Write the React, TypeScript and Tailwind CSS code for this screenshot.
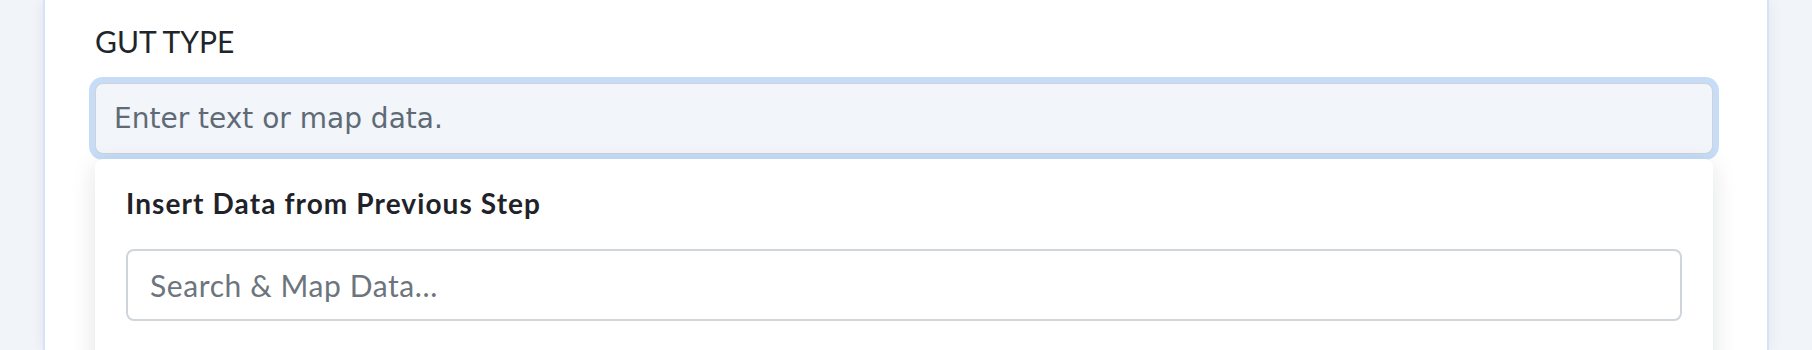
import React from "react";

const FieldLabel = ({ children }: { children: React.ReactNode }) => (
  <label className="block pt-[23px] text-[30px] leading-[36px] text-[#212529] font-['Lato',sans-serif]">
    {children}
  </label>
);

const MapDataDropdown = () => {
  return (
    <div className="mt-[5px] rounded-lg bg-white px-[31px] pt-[27px] pb-[60px] shadow-[0_6px_24px_rgba(15,23,42,0.12)]">
      <h3 className="text-[28px] leading-[34px] font-bold tracking-[1.1px] text-[#1f2329] font-['Lato',sans-serif]">
        Insert Data from Previous Step
      </h3>
      <input
        type="text"
        placeholder="Search & Map Data..."
        className="mt-[29px] block h-[72px] w-full rounded-lg border-2 border-[#d0d5db] bg-white pl-[22px] text-[30px] tracking-[0.6px] text-[#1f2329] outline-none placeholder:text-[#6c757d] font-['Lato',sans-serif]"
      />
    </div>
  );
};

export default function App() {
  return (
    <div className="h-[350px] overflow-hidden bg-[#f1f5f9]">
      <div className="mx-[43px] h-[350px] border-x-2 border-[#d4e3f8] bg-white pl-[50px] pr-[54px] shadow-[0_0_14px_rgba(15,23,42,0.07)]">
        <FieldLabel>GUT TYPE</FieldLabel>
        <input
          type="text"
          placeholder="Enter text or map data."
          className="mt-[24px] block h-[71px] w-full rounded-lg border border-[#cfd2d6] bg-[#f2f5f9] pl-[18px] text-[28px] text-[#1f2329] outline-none ring-[6px] ring-[#c6dcf7] placeholder:text-[#5f6a77] font-['DejaVu_Sans',sans-serif]"
        />
        <MapDataDropdown />
      </div>
    </div>
  );
}
